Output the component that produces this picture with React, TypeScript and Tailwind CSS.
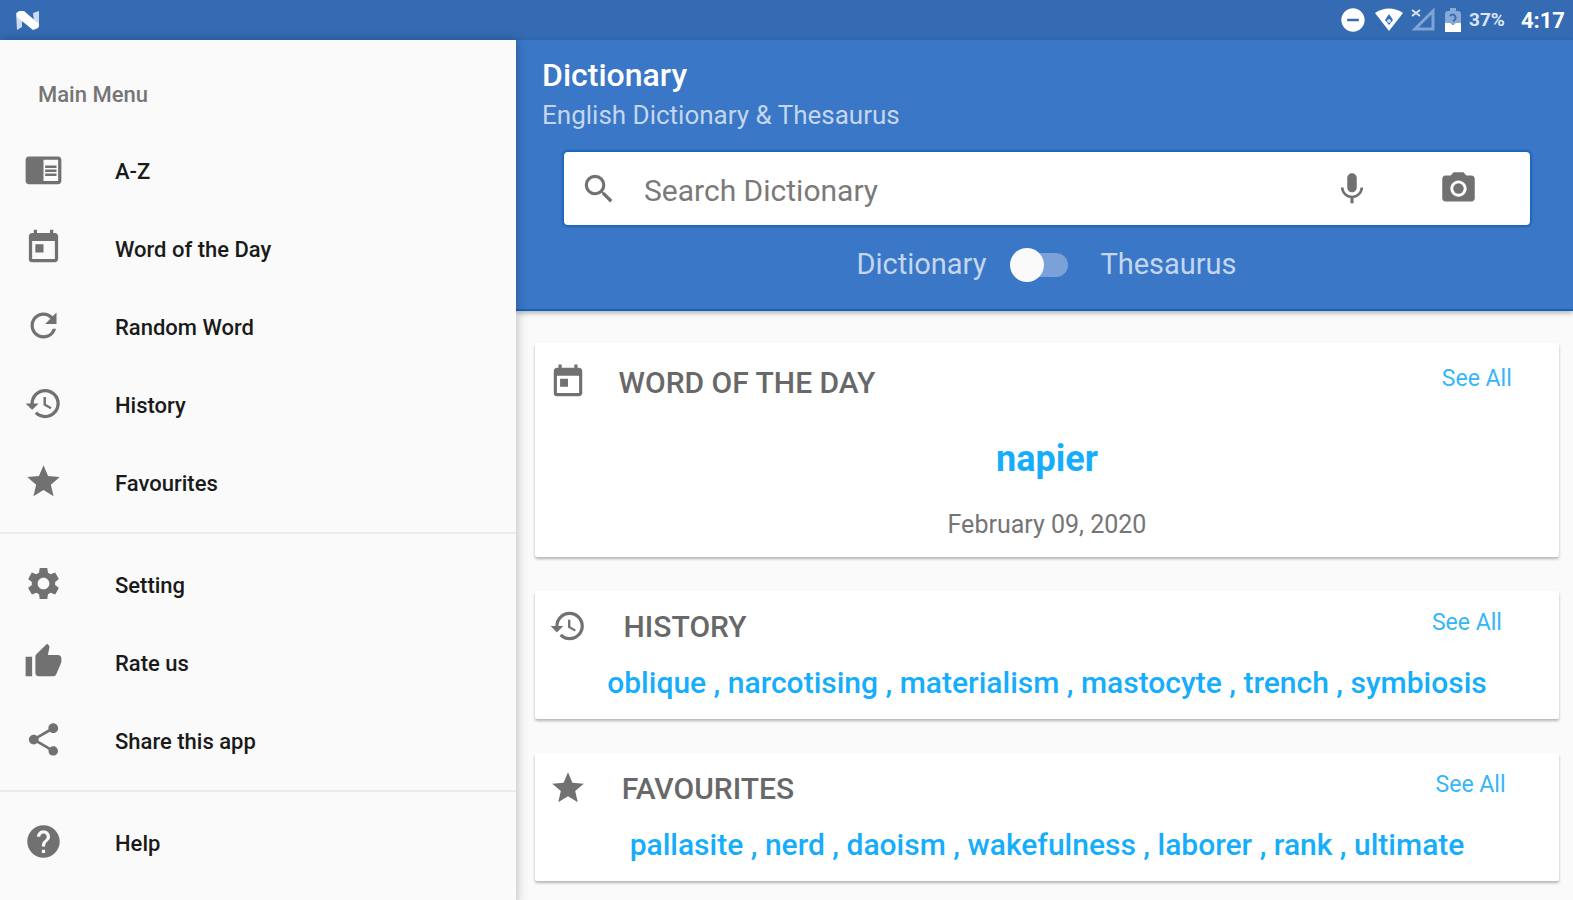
import { useState, type ReactNode } from "react";
import type { IconType } from "react-icons";
import {
  MdChromeReaderMode,
  MdDoNotDisturbOn,
  MdHelp,
  MdHistory,
  MdPhotoCamera,
  MdRefresh,
  MdSearch,
  MdSettings,
  MdShare,
  MdStar,
  MdThumbUp,
  MdToday,
} from "react-icons/md";

type MenuItem = { label: string; icon: IconType };

const menuGroups: MenuItem[][] = [
  [
    { label: "A-Z", icon: MdChromeReaderMode },
    { label: "Word of the Day", icon: MdToday },
    { label: "Random Word", icon: MdRefresh },
    { label: "History", icon: MdHistory },
    { label: "Favourites", icon: MdStar },
  ],
  [
    { label: "Setting", icon: MdSettings },
    { label: "Rate us", icon: MdThumbUp },
    { label: "Share this app", icon: MdShare },
  ],
  [{ label: "Help", icon: MdHelp }],
];

const historyWords = ["oblique", "narcotising", "materialism", "mastocyte", "trench", "symbiosis"];
const favouriteWords = ["pallasite", "nerd", "daoism", "wakefulness", "laborer", "rank", "ultimate"];

const NougatLogo = () => (
  <svg viewBox="0 0 24 20" className="h-5 w-6" aria-hidden="true">
    <path d="M0 3 6 1v16l-5 3zM17 3l6-2v16l-4 2z" fill="#ccdaf2" />
    <path d="M1 3 3 1h5l15 13-1 4-5 2L1 7z" fill="#fff" />
  </svg>
);

const WifiIcon = () => (
  <svg viewBox="0 0 28 24" className="h-6 w-7" aria-hidden="true">
    <path d="M0 5C8-1 20-1 28 5L14 23z" fill="#fff" />
    <path d="m14 6 4 6-4 5-4-5z" fill="#356cb3" />
    <circle cx="14" cy="13" r="2" fill="#c9d9f0" />
  </svg>
);

const NoSignalIcon = () => (
  <svg viewBox="0 0 24 24" className="h-6 w-6" fill="none" aria-hidden="true">
    <path d="M22 3v18H4z" stroke="#7fa3d4" strokeWidth="3" />
    <path d="m1 2 8 6M9 2 1 8" stroke="#dbe6f5" strokeWidth="2" />
  </svg>
);

const BatteryIcon = () => (
  <svg viewBox="0 0 16 24" className="h-6 w-4" aria-hidden="true">
    <path d="M5 0h6v3h2q3 0 3 3v10H0V6q0-3 3-3h2z" fill="#86a9d8" />
    <path d="M5 8q3-3 5 0t-2 5" stroke="#356cb3" strokeWidth="2" fill="none" />
    <path d="M0 15h5l3 2 3-2h5v9H0z" fill="#fff" />
  </svg>
);

const MicIcon = () => (
  <svg viewBox="0 0 24 24" className="size-[38px]" fill="currentColor" aria-hidden="true">
    <path d="M12 14c1.66 0 2.99-1.34 2.99-3L15 5c0-1.66-1.34-3-3-3S9 3.34 9 5v6c0 1.66 1.34 3 3 3zm5.3-3c0 3-2.54 5.1-5.3 5.1S6.7 14 6.7 11H5c0 3.41 2.72 6.23 6 6.72V21h2v-3.28c3.28-.48 6-3.3 6-6.72h-1.7z" />
  </svg>
);

const StatusBar = () => (
  <div className="flex h-10 items-center bg-[#346bb2] pr-2 pl-4 text-white">
    <NougatLogo />
    <div className="ml-auto flex items-center">
      <MdDoNotDisturbOn className="size-7" />
      <span className="ml-2">
        <WifiIcon />
      </span>
      <span className="ml-2">
        <NoSignalIcon />
      </span>
      <span className="ml-2.5">
        <BatteryIcon />
      </span>
      <span className="ml-2 text-[19px] font-bold text-[#dbe6f5]">37%</span>
      <span className="ml-4 text-[22px] font-bold">4:17</span>
    </div>
  </div>
);

const Sidebar = () => (
  <nav className="relative z-10 w-[516px] shrink-0 bg-[#fafafa] shadow-[1px_0_10px_rgba(0,0,0,0.25)]">
    <h2 className="flex h-[92px] items-center px-[38px] pt-4 text-[22px] font-medium text-[#757575]">
      Main Menu
    </h2>
    {menuGroups.map((group, index) => (
      <ul
        key={index}
        className="mb-3 border-b-2 border-[#ebebeb] pb-2.5 last:border-0"
      >
        {group.map(({ label, icon: Icon }) => (
          <li key={label}>
            <button className="flex h-[78px] w-full items-center gap-[52px] px-6 text-[22px] font-medium text-[#1a1a1a]">
              <Icon className="mb-1 size-[39px] text-[#717171]" />
              {label}
            </button>
          </li>
        ))}
      </ul>
    ))}
  </nav>
);

const Header = () => {
  const [thesaurus, setThesaurus] = useState(false);

  return (
    <header className="relative border-b-2 border-[#1663b8] bg-[#3a77c7] pt-[15px] pb-6 shadow-[0_2px_5px_rgba(0,0,0,0.3)]">
      <h1 className="pl-[26px] text-[32px] leading-10 font-medium text-white">Dictionary</h1>
      <p className="pl-[26px] text-[26px] leading-10 text-[#c4d6ee]">English Dictionary &amp; Thesaurus</p>
      <div className="mt-[17px] mr-[43px] ml-12 flex h-[73px] items-center rounded bg-white pr-[52px] pl-4 text-[#717171] shadow-[0_0_2px_2px_#1c66ba]">
        <MdSearch className="size-[38px]" />
        <input
          type="search"
          aria-label="Search Dictionary"
          placeholder="Search Dictionary"
          className="ml-[26px] min-w-0 grow pt-1 text-[30px] outline-none placeholder:text-[#7a7a7a]"
        />
        <button aria-label="Voice search">
          <MicIcon />
        </button>
        <button aria-label="Camera search" className="ml-[68px]">
          <MdPhotoCamera className="size-[39px]" />
        </button>
      </div>
      <div className="mt-5 flex h-10 items-center justify-center pl-1 text-[29px] text-[#c4d6ee]">
        <label htmlFor="mode">Dictionary</label>
        <span className="relative mr-8 ml-6 flex h-[34px] w-[58px] items-center">
          <input
            id="mode"
            type="checkbox"
            role="switch"
            aria-label="Use thesaurus"
            checked={thesaurus}
            onChange={(e) => setThesaurus(e.target.checked)}
            className="peer ml-3 h-6 w-full appearance-none rounded-full bg-[#7ba2d8]"
          />
          <span className="pointer-events-none absolute left-0 size-[34px] rounded-full bg-[#fafafa] peer-checked:left-6" />
        </span>
        <label htmlFor="mode">Thesaurus</label>
      </div>
    </header>
  );
};

type CardProps = { title: string; icon: IconType; children: ReactNode };

const Card = ({ title, icon: Icon, children }: CardProps) => (
  <section className="rounded-xs bg-white pt-4 pl-3.5 shadow-[0_2px_3px_rgba(0,0,0,0.28)] first:pt-5">
    <div className="flex">
      <div className="grow">
        <Icon className="size-[38px] text-[#717171]" />
      </div>
      <h2 className="grow-24 pl-2 text-[30px] leading-10 font-medium text-[#686868]">{title}</h2>
      <div className="grow-2">
        <a href="#" className="text-[23px] leading-8 text-[#35b6fa]">
          See All
        </a>
      </div>
    </div>
    {children}
  </section>
);

const WordList = ({ words }: { words: string[] }) => (
  <p className="mt-4 pr-3.5 pb-4 text-center text-[30px] leading-10 font-medium text-[#16aefc]">
    {words.join(" , ")}
  </p>
);

const App = () => {
  return (
    <div className="flex min-h-screen flex-col bg-[#fafafa] font-['Roboto',sans-serif]">
      <StatusBar />
      <div className="flex grow">
        <Sidebar />
        <div className="min-w-0 grow">
          <Header />
          <main className="flex flex-col gap-[34px] pt-8 pr-3.5 pl-[19px]">
            <Card title="WORD OF THE DAY" icon={MdToday}>
              <div className="pr-3.5 pb-3 text-center">
                <p className="mt-9 text-[36px] leading-10 font-bold text-[#16aefc]">napier</p>
                <p className="mt-[26px] text-[25px] leading-10 text-[#757575]">February 09, 2020</p>
              </div>
            </Card>
            <Card title="HISTORY" icon={MdHistory}>
              <WordList words={historyWords} />
            </Card>
            <Card title="FAVOURITES" icon={MdStar}>
              <WordList words={favouriteWords} />
            </Card>
          </main>
        </div>
      </div>
    </div>
  );
};

export default App;
